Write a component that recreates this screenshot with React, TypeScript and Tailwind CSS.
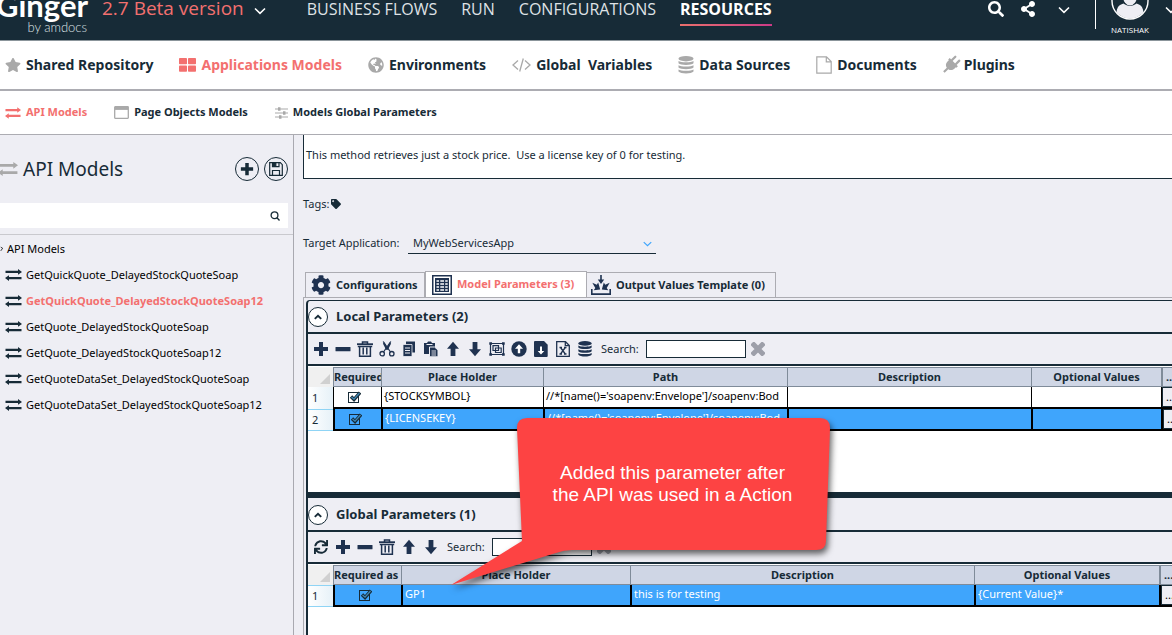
import React from "react";
import {
  FaCog,
  FaGlobeAmericas,
  FaSearch,
  FaShareAlt,
  FaStar,
  FaSync,
  FaTag,
} from "react-icons/fa";

type SvgProps = { className?: string };

const Chevron = ({ className }: SvgProps) => (
  <svg viewBox="0 0 12 8" className={className} fill="none" stroke="currentColor" strokeWidth="1.6">
    <path d="M1 1.5 6 6.3 11 1.5" />
  </svg>
);

const Plus = ({ className }: SvgProps) => (
  <svg viewBox="0 0 16 16" className={className} fill="currentColor">
    <path d="M6 1h4v5h5v4h-5v5H6v-5H1V6h5z" />
  </svg>
);

const Minus = ({ className }: SvgProps) => (
  <svg viewBox="0 0 16 16" className={className} fill="currentColor">
    <rect x="0.500" y="6" width="15" height="4.300" rx="0.500" />
  </svg>
);

const Up = ({ className }: SvgProps) => (
  <svg viewBox="0 0 16 16" className={className} fill="currentColor">
    <path d="M8 .8 14 7.800H10.400V15H5.600V7.800H2z" />
  </svg>
);

const Down = ({ className }: SvgProps) => (
  <svg viewBox="0 0 16 16" className={className} fill="currentColor">
    <path d="M8 15.200 2 8.200H5.600V1h4.800v7.200H14z" />
  </svg>
);

const Arrows = ({ className }: SvgProps) => (
  <svg viewBox="0 0 17 12" className={className} fill="currentColor">
    <path d="M0.500 1.700h12.500V0l4 2.900-4 2.900V4.100H0.500z" />
    <path d="M16.500 10.300H4V12L0 9.100l4-2.900v1.700h12.500z" />
  </svg>
);

const Grid4 = ({ className }: SvgProps) => (
  <svg viewBox="0 0 17 14" className={className} fill="currentColor">
    <rect x="0" y="0" width="8" height="6.300" rx="0.800" />
    <rect x="9" y="0" width="8" height="6.300" rx="0.800" />
    <rect x="0" y="7.500" width="8" height="6.300" rx="0.800" />
    <rect x="9" y="7.500" width="8" height="6.300" rx="0.800" />
  </svg>
);

const Code = ({ className }: SvgProps) => (
  <svg viewBox="0 0 19 14" className={className} fill="none" stroke="currentColor" strokeWidth="1.300">
    <path d="M6 2.500 1 7l5 4.500M13 2.500 18 7l-5 4.500M11.300.500 7.700 13.500" />
  </svg>
);

const Stack = ({ className }: SvgProps) => (
  <svg viewBox="0 0 16 18" className={className} fill="currentColor">
    <ellipse cx="8" cy="2.700" rx="7.500" ry="2.700" />
    <path d="M.5 5c2 1.800 13 1.800 15 0v2.200c-2 2.300-13 2.300-15 0z" />
    <path d="M.5 9.200c2 1.800 13 1.800 15 0v2.200c-2 2.300-13 2.300-15 0z" />
    <path d="M.5 13.400c2 1.800 13 1.800 15 0v2.200c-2 2.600-13 2.600-15 0z" />
  </svg>
);

const Page = ({ className }: SvgProps) => (
  <svg viewBox="0 0 16 18" className={className} fill="none" stroke="currentColor" strokeWidth="1.200">
    <path d="M.8.8h9.700l4.700 4.700v11.700H.8zM10.300.8v5h4.900" />
  </svg>
);

const Plug = ({ className }: SvgProps) => (
  <svg viewBox="0 0 18 18" className={className} fill="currentColor">
    <g transform="rotate(45 9 9)">
      <rect x="4.600" y="-2.200" width="2.500" height="7.500" rx="1.100" />
      <rect x="10.900" y="-2.200" width="2.500" height="7.500" rx="1.100" />
      <path d="M2.500 4.500h13v2.400h-.9v2.400c0 2.800-1.900 4.700-4.400 5.200v5.800H7.800v-5.800C5.300 14 3.400 12.100 3.400 9.300V6.900h-.9z" />
    </g>
  </svg>
);

const Windowed = ({ className }: SvgProps) => (
  <svg viewBox="0 0 15 13" className={className} fill="none" stroke="currentColor">
    <rect x="0.700" y="0.700" width="13.600" height="11.600" rx="0.500" strokeWidth="1.300" />
    <path d="M1 2.200h13" strokeWidth="3.400" />
  </svg>
);

const Sliders = ({ className }: SvgProps) => (
  <svg viewBox="0 0 13 12" className={className} fill="currentColor">
    <path d="M0 1.500h13v1H0zM0 5.500h13v1H0zM0 9.500h13v1H0z" />
    <path d="M3 .3h2.500v3.400H3zM8 4.300h2.500v3.400H8zM4 8.300h2.500v3.400H4z" />
  </svg>
);

const Save = ({ className }: SvgProps) => (
  <svg viewBox="0 0 14 14" className={className} fill="none" stroke="currentColor" strokeWidth="1.200">
    <path d="M.7.7h10.600l2 2v10.600H.7z" />
    <path d="M3.500 13.300V8.500h7v4.800M3.500.7v4h6.500v-4" />
    <path d="M4 1h2.800v3.500H4z" fill="currentColor" />
  </svg>
);

const TableIcon = ({ className }: SvgProps) => (
  <svg viewBox="0 0 20 20" className={className} fill="currentColor">
    <path d="M0 0h20v20H0zM1.500 1.500v17h17v-17z" fillRule="evenodd" />
    <path d="M3 3h14v14H3z" />
    <path
      d="M4.500 6h2.500M8.300 6h3.700M13.200 6h2.500M4.500 9h2.500M8.300 9h3.700M13.200 9h2.500M4.500 12h2.500M8.300 12h3.700M13.200 12h2.500M4.500 15h2.500M8.300 15h3.700M13.200 15h2.500"
      stroke="#fff"
      strokeWidth="1.500"
    />
  </svg>
);

const Collect = ({ className }: SvgProps) => (
  <svg viewBox="0 0 20 20" className={className} fill="currentColor">
    <path d="M0 14h1.600v4.300h16.800V14H20v6H0z" />
    <path d="M9.200 0h1.600v4.500h2.400L10 9 6.800 4.500h2.400z" />
    <path d="M1.300 7.800 5.800 9.800 7.200 7.600l2 7-6.500.6 1.600-2.200z" />
    <path d="M18.700 7.800 14.200 9.800l-1.400-2.200-2 7 6.500.6-1.600-2.200z" />
  </svg>
);

const Trash = ({ className }: SvgProps) => (
  <svg viewBox="0 0 16 16" className={className} fill="none" stroke="currentColor" strokeWidth="1.500">
    <path d="M0 3.200h16" strokeWidth="1.800" />
    <path d="M.8 5.500h14.400" />
    <path d="M5.500 3V.9h5V3M2.600 5.300v9.900h10.800V5.300M6.200 6.500v7M9.800 6.500v7" />
  </svg>
);

const Cut = ({ className }: SvgProps) => (
  <svg viewBox="0 0 16 16" className={className} fill="none" stroke="currentColor" strokeWidth="1.300">
    <circle cx="3.200" cy="12.700" r="2.200" />
    <circle cx="12.800" cy="12.700" r="2.200" />
    <path d="M4.500 11 11.800.5M11.500 11 4.200.5" />
    <path d="m8 8.500 3.300-6.500M8 8.500 4.700 2" strokeWidth="1.800" />
  </svg>
);

const Copy = ({ className }: SvgProps) => (
  <svg viewBox="0 0 16 16" className={className}>
    <path d="M5 .5h9v11H5z" fill="currentColor" />
    <path d="M2 3.500h9v12H2z" fill="currentColor" stroke="#eeeef4" strokeWidth=".8" />
    <path d="M4 7h5M4 9.500h5M4 12h5" stroke="#eeeef4" strokeWidth="1" />
  </svg>
);

const Paste = ({ className }: SvgProps) => (
  <svg viewBox="0 0 16 16" className={className}>
    <path d="M1 2h3l1-1.500h3L9 2h3v11H1z" fill="currentColor" />
    <path d="M3.500 3.500h6" stroke="#eeeef4" />
    <path d="M6.500 6h5l3.500 3v6.800H6.500z" fill="currentColor" stroke="#eeeef4" strokeWidth="1" />
    <path d="M8.500 10h4.500M8.500 12h4.500M8.500 14h4.500" stroke="#eeeef4" strokeWidth=".9" />
  </svg>
);

const Group = ({ className }: SvgProps) => (
  <svg viewBox="0 0 16 14" className={className} fill="none" stroke="currentColor">
    <path d="M1.500 1.500h13v11h-13z" strokeWidth="1.200" />
    <path d="M4 3.700h5.500v4.800H4zM6.500 6h5.700v4.500H6.500z" strokeWidth="1.200" />
    <path
      d="M.3.300h2.700v2.500H.3zM13 .3h2.700v2.500H13zM.3 11.200h2.700v2.500H.3zM13 11.200h2.700v2.500H13z"
      fill="currentColor"
      stroke="none"
    />
  </svg>
);

const CircleUp = ({ className }: SvgProps) => (
  <svg viewBox="0 0 16 16" className={className}>
    <circle cx="8" cy="8" r="7.700" fill="currentColor" />
    <path d="M8 3.300 12 7.700H9.200v4.500H6.800V7.700H4z" fill="#fff" />
  </svg>
);

const FileDown = ({ className }: SvgProps) => (
  <svg viewBox="0 0 14 16" className={className}>
    <path d="M1 0h9l3.700 3.700V15q0 1-1 1H1q-1 0-1-1V1Q0 0 1 0z" fill="currentColor" />
    <path d="M6 5.500h2V10h2.300L7 13.600 3.700 10H6z" fill="#fff" />
  </svg>
);

const Excel = ({ className }: SvgProps) => (
  <svg viewBox="0 0 14 16" className={className} fill="none" stroke="currentColor" strokeWidth="1.300">
    <path d="M.7.7H9.500L13.300 4.500v10.800H.7zM9.300.7v4h4" />
    <path d="m4.500 6.500 4.800 6.500M9.300 6.500 4.500 13M3.500 6.500h2.500M8 6.500h2.500M3.500 13h2.500M8 13h2.500" />
  </svg>
);

const Cross = ({ className }: SvgProps) => (
  <svg viewBox="0 0 14 14" className={className} fill="none" stroke="currentColor" strokeWidth="5">
    <path d="m2.800 2.800 8.400 8.400M11.200 2.800 2.800 11.200" strokeLinecap="square" />
  </svg>
);

const Tick = ({ className }: SvgProps) => (
  <svg viewBox="0 0 12 12" className={className} fill="none">
    <path d="M2 5.500 5 8.500 11 1.500" stroke="#172b37" strokeWidth="3.400" />
    <path d="M2.500 6 5 8.200 10.500 2" stroke="#3f86b4" strokeWidth="1.300" />
  </svg>
);

const Avatar = ({ className }: SvgProps) => (
  <svg viewBox="0 0 38 38" className={className}>
    <defs>
      <clipPath id="avatar-clip">
        <circle cx="19" cy="19" r="17.500" />
      </clipPath>
    </defs>
    <g clipPath="url(#avatar-clip)" fill="#eeeef4">
      <ellipse cx="19" cy="14" rx="7" ry="9.500" />
      <path d="M5 38c0-12 2-15 7.500-16.500 4 3.300 9 3.300 13 0C31 23 33 26 33 38z" />
    </g>
    <circle cx="19" cy="19" r="18" fill="none" stroke="#fff" strokeWidth="1.400" />
  </svg>
);

const topLinks = ["BUSINESS FLOWS", "RUN", "CONFIGURATIONS"];

const sections = [
  { label: "Shared Repository", icon: <FaStar className="size-4" /> },
  { label: "Applications Models", icon: <Grid4 className="h-3.5 w-[17px]" />, active: true },
  { label: "Environments", icon: <FaGlobeAmericas className="size-4" /> },
  { label: "Global  Variables", icon: <Code className="h-3.5 w-[19px]" /> },
  { label: "Data Sources", icon: <Stack className="h-[18px] w-4" /> },
  { label: "Documents", icon: <Page className="h-[18px] w-4" /> },
  { label: "Plugins", icon: <Plug className="size-4 overflow-visible" /> },
];

const models = [
  "GetQuickQuote_DelayedStockQuoteSoap",
  "GetQuickQuote_DelayedStockQuoteSoap12",
  "GetQuote_DelayedStockQuoteSoap",
  "GetQuote_DelayedStockQuoteSoap12",
  "GetQuoteDataSet_DelayedStockQuoteSoap",
  "GetQuoteDataSet_DelayedStockQuoteSoap12",
];

const localTools: [string, React.ReactNode][] = [
  ["Add", <Plus className="size-4" />],
  ["Remove", <Minus className="size-4" />],
  ["Delete all", <Trash className="size-4" />],
  ["Cut", <Cut className="size-4" />],
  ["Copy", <Copy className="size-4" />],
  ["Paste", <Paste className="size-4" />],
  ["Move up", <Up className="size-4" />],
  ["Move down", <Down className="size-4" />],
  ["Merge", <Group className="h-3.5 w-4" />],
  ["Upload", <CircleUp className="size-4" />],
  ["Import", <FileDown className="h-4 w-3.5" />],
  ["Export to Excel", <Excel className="h-4 w-3.5" />],
  ["Data source", <Stack className="size-4" />],
];

const globalTools: [string, React.ReactNode][] = [
  ["Refresh", <FaSync className="size-3.5 text-[#172b37]" />],
  ["Add", <Plus className="size-4" />],
  ["Remove", <Minus className="size-4" />],
  ["Delete all", <Trash className="size-4" />],
  ["Move up", <Up className="size-4" />],
  ["Move down", <Down className="size-4" />],
];

function Toolbar({ tools, id }: { tools: [string, React.ReactNode][]; id: string }) {
  return (
    <div className="flex h-[30px] items-center pl-0.5 text-[#1f3250]">
      {tools.map(([label, icon]) => (
        <button key={label} aria-label={label} className="flex w-[22px] shrink-0 justify-center">
          {icon}
        </button>
      ))}
      <label htmlFor={id} className="ml-[5px] w-[45px] text-[11px] text-[#172b37]">
        Search:
      </label>
      <input id={id} className="h-[18px] w-[100px] border border-[#172b37] bg-white px-1 text-[11px]" />
      <button aria-label="Clear search" className="ml-[5px] text-[#9d9fa9]">
        <Cross className="size-3.5" />
      </button>
    </div>
  );
}

function PanelHeader({ title }: { title: string }) {
  return (
    <div className="flex h-[31px] shrink-0 items-center gap-2">
      <button
        aria-label={"Collapse " + title}
        className="flex size-5 items-center justify-center rounded-full border border-[#172b37] bg-white"
      >
        <svg viewBox="0 0 10 7" className="h-1.5 w-2" fill="none" stroke="currentColor" strokeWidth="2.400">
          <path d="M1 5.800 5 2l4 3.800" />
        </svg>
      </button>
      <h2 className="text-[13px] font-bold">{title}</h2>
    </div>
  );
}

type Column = { label: string; width: string };

function ParamTable({
  columns,
  rows,
  selected,
}: {
  columns: Column[];
  rows: string[][];
  selected: number;
}) {
  return (
    <table className="w-full table-fixed border-separate border-spacing-0 bg-white text-[11px]">
      <colgroup>
        <col className="w-[25px]" />
        {columns.map((c) => (
          <col key={c.label} className={c.width} />
        ))}
        <col />
      </colgroup>
      <thead>
        <tr className="h-5">
          <th className="bg-[#f0f0f0] p-0 align-bottom">
            <svg viewBox="0 0 10 10" className="mb-[3px] ml-auto mr-[3px] size-2.5" fill="#d0d0d0">
              <path d="M10 0v10H0z" />
            </svg>
          </th>
          {columns.map((c, i) => (
            <th
              key={c.label}
              className={
                "overflow-hidden whitespace-nowrap border-y border-l border-[#7f8b99] bg-[#cfd6e5] p-0 font-bold " +
                (i === 0 ? "text-left" : "text-center")
              }
            >
              {c.label}
            </th>
          ))}
          <th className="overflow-hidden whitespace-nowrap border-y border-l-2 border-[#7f8b99] bg-[#cfd6e5] p-0 pl-[3px] text-left font-bold">
            ...
          </th>
        </tr>
      </thead>
      <tbody>
        {rows.map((row, r) => {
          const on = r === selected;
          const cell = on
            ? "border-b-2 border-l-2 border-black bg-[#3fa5fc] text-white"
            : "border-b-2 border-l border-black text-black";
          return (
            <tr key={row[0]} className="h-[22px]">
              <th
                scope="row"
                className={
                  "bg-linear-to-r from-white to-[#e6f1f8] p-0 pl-1 text-left font-normal " +
                  (on ? "border-y border-[#8fd4f5]" : "")
                }
              >
                {r + 1}
              </th>
              <td className={cell + " p-0 pr-2"}>
                <span className="relative mx-auto block size-[11px] text-[#172b37]">
                  <input
                    type="checkbox"
                    defaultChecked
                    aria-label={"Required " + row[0]}
                    className="block size-[11px] appearance-none border border-current"
                  />
                  <Tick className="pointer-events-none absolute -top-px left-px size-3" />
                </span>
              </td>
              {row.map((text, i) => (
                <td key={i} className={cell + " overflow-hidden whitespace-nowrap p-0 pl-0.5 align-top leading-[18px]"}>
                  {text}
                </td>
              ))}
              <td className={cell + " overflow-hidden p-0"}>
                <button
                  aria-label={"Edit optional values of " + row[0]}
                  className="block h-5 w-6 border border-[#172b37] bg-[#eeeef4] pl-[3px] text-left text-[11px] text-black"
                >
                  ...
                </button>
              </td>
            </tr>
          );
        })}
      </tbody>
    </table>
  );
}

export default function App() {
  return (
    <div className="relative flex h-screen flex-col overflow-hidden bg-white font-['Noto_Sans','Open_Sans',sans-serif] text-[#172b37]">
      <header className="flex h-[41px] shrink-0 items-start overflow-hidden border-b border-[#8b959b] bg-[#172b37] font-['Open_Sans',sans-serif] text-[#dfe2e6]">
        <div className="-ml-1 -mt-2.5 w-[91px] shrink-0 font-['Lato',sans-serif]">
          <div className="text-[31px] font-bold leading-[30px] text-white">Ginger</div>
          <div className="text-right text-[13px] font-light leading-[14px]">by amdocs</div>
        </div>
        <button className="-mt-1.5 ml-[15px] flex shrink-0 items-center gap-2.5 text-[19px] leading-7 text-[#f3706f]">
          2.7 Beta version
          <Chevron className="mt-1.5 h-2 w-3 text-white" />
        </button>
        <nav className="-mt-px ml-[41px] flex gap-6 text-base leading-5">
          {topLinks.map((l) => (
            <a key={l} href="#" className="whitespace-nowrap">
              {l}
            </a>
          ))}
          <a href="#" className="font-bold text-white">
            RESOURCES
            <span className="mt-[5px] block h-0.5 bg-linear-to-r from-[#ea6f6c] to-[#cc3a86]" />
          </a>
        </nav>
        <div className="ml-auto flex shrink-0 items-start text-white">
          <button aria-label="Search" className="mt-px">
            <FaSearch className="size-4" />
          </button>
          <button aria-label="Share" className="ml-4 mt-px">
            <FaShareAlt className="size-4" />
          </button>
          <button aria-label="More" className="ml-[22px] mt-1.5">
            <Chevron className="h-2 w-3" />
          </button>
          <span className="ml-[25px] h-[29px] w-px bg-white" />
          <button className="-mt-[18px] ml-3.5 flex w-[40px] flex-col items-center">
            <Avatar className="size-[38px]" />
            <span className="mt-1 text-[8px] leading-3">NATISHAK</span>
          </button>
          <button aria-label="Account" className="-mr-[5px] ml-[15px] mt-1.5">
            <Chevron className="h-2 w-3" />
          </button>
        </div>
      </header>

      <nav className="flex h-[50px] shrink-0 items-center gap-[26px] border-b-2 border-[#acacb2] pl-[5px] text-sm font-bold">
        {sections.map((s) => (
          <a
            key={s.label}
            href="#"
            className={"flex items-center gap-[5px] whitespace-pre " + (s.active ? "text-[#f3706f]" : "")}
          >
            <span className={s.active ? "" : "text-[#a9a9a9]"}>{s.icon}</span>
            {s.label}
          </a>
        ))}
      </nav>

      <nav className="flex h-11 shrink-0 items-center gap-[27px] border-b border-[#acacb2] pl-[5px] text-[11px] font-bold">
        <a href="#" className="flex items-center gap-[5px] text-[#f3706f]">
          <Arrows className="h-3 w-4" />
          API Models
        </a>
        <a href="#" className="flex items-center gap-[5px]">
          <Windowed className="h-[13px] w-[15px] text-[#a9a9a9]" />
          Page Objects Models
        </a>
        <a href="#" className="flex items-center gap-[5px]">
          <Sliders className="h-3 w-[13px] text-[#a9a9a9]" />
          Models Global Parameters
        </a>
      </nav>

      <div className="flex min-h-0 flex-1 bg-[#eeeef4]">
        <aside className="w-[294px] shrink-0 border-r border-[#a9a9b0]">
          <div className="flex h-[68px] items-center pr-[5px]">
            <Arrows className="-ml-0.5 h-4 w-5 text-[#a9a9a9]" />
            <h1 className="ml-[5px] flex-1 text-[19px]">API Models</h1>
            <button aria-label="Add" className="flex size-6 items-center justify-center rounded-full border border-[#172b37]">
              <Plus className="size-3.5" />
            </button>
            <button
              aria-label="Save"
              className="ml-[5px] flex size-6 items-center justify-center rounded-full border border-[#172b37]"
            >
              <Save className="size-3.5" />
            </button>
          </div>
          <div className="border-b border-[#c9c9ce] pb-1.5">
            <div className="mr-[5px] flex h-[25px] items-center bg-white">
              <input aria-label="Search models" className="min-w-0 flex-1 px-1 text-xs outline-none" />
              <button aria-label="Search" className="mr-2">
                <svg viewBox="0 0 10 10" className="size-2.5" fill="none" stroke="currentColor" strokeWidth="1.300">
                  <circle cx="4.500" cy="4.200" r="3.400" />
                  <path d="m7 6.800 2.500 2.700" />
                </svg>
              </button>
            </div>
          </div>
          <ul className="pt-px text-[11px] text-black">
            <li className="flex h-[26px] items-center">
              <svg viewBox="0 0 4 6" className="mr-1 h-1.5 w-[3px]" fill="none" stroke="currentColor">
                <path d="M1 .5 3.500 2 1 5.500" />
              </svg>
              API Models
            </li>
            {models.map((m, i) => (
              <li key={m} className="flex h-[26px] items-center gap-1 whitespace-nowrap pl-[5px]">
                <Arrows className="h-3 w-[17px] shrink-0 text-[#172b37]" />
                <a href="#" className={i === 1 ? "font-bold text-[#f3706f]" : ""}>
                  {m}
                </a>
              </li>
            ))}
          </ul>
        </aside>

        <main className="flex min-w-0 flex-1 flex-col pl-[9px]">
          <textarea
            aria-label="Description"
            defaultValue="This method retrieves just a stock price.  Use a license key of 0 for testing."
            className="block h-11 shrink-0 resize-none overflow-hidden border-b border-l border-[#172b37] bg-white pl-0.5 pt-3 text-[11px] leading-4 outline-none"
          />
          <div className="mt-[17px] flex h-4 shrink-0 items-center gap-0.5 text-[11px]">
            Tags:
            <FaTag className="size-2.5" />
          </div>
          <div className="mt-5 flex h-[22px] shrink-0 items-center text-[11px]">
            <label htmlFor="target" className="w-[105px] whitespace-nowrap">
              Target Application:
            </label>
            <div className="relative h-[21px] w-[248px] border-b border-[#172b37]">
              <select id="target" className="h-5 w-full appearance-none bg-transparent pl-[5px] pt-0.5 text-[11px] outline-none">
                <option>MyWebServicesApp</option>
              </select>
              <Chevron className="pointer-events-none absolute right-1 top-2 h-1.5 w-[9px] text-[#3fa5fc]" />
            </div>
          </div>

          <div role="tablist" className="mt-[17px] flex h-[26px] shrink-0 items-end pl-0.5 text-[11px] font-bold">
            <button role="tab" className="flex h-[25px] w-[120px] items-center gap-[5px] whitespace-nowrap border border-b-0 border-[#acacb2] pl-[5px]">
              <FaCog className="size-5 text-[#1f3250]" />
              Configurations
            </button>
            <button
              role="tab"
              aria-selected="true"
              className="flex h-[26px] w-[162px] items-center gap-[5px] whitespace-nowrap border border-b-0 border-[#acacb2] bg-white pl-[6px] text-[#f3706f]"
            >
              <TableIcon className="size-5 text-[#1f3250]" />
              Model Parameters (3)
            </button>
            <button
              role="tab"
              className="flex h-[25px] w-[189px] items-center gap-[5px] whitespace-nowrap border border-b-0 border-l-0 border-[#acacb2] pl-1"
            >
              <Collect className="size-5 text-[#1f3250]" />
              Output Values Template (0)
            </button>
          </div>

          <div className="flex min-h-0 flex-1 flex-col border-l border-t border-[#acacb2] pl-0.5 pt-0.5">
            <section className="flex h-[198px] shrink-0 flex-col rounded-tl border-b-[6px] border-l-2 border-t border-[#172b37] bg-[#eeeef4]">
              <PanelHeader title="Local Parameters (2)" />
              <div className="border-b-2 border-t-2 border-[#172b37]">
                <Toolbar tools={localTools} id="local-search" />
              </div>
              <div className="min-h-0 flex-1 bg-white pt-px">
                <ParamTable
                  selected={1}
                  columns={[
                    { label: "Required", width: "w-[48px]" },
                    { label: "Place Holder", width: "w-[162px]" },
                    { label: "Path", width: "w-[244px]" },
                    { label: "Description", width: "w-[244px]" },
                    { label: "Optional Values", width: "w-[130px]" },
                  ]}
                  rows={[
                    ["{STOCKSYMBOL}", "//*[name()='soapenv:Envelope']/soapenv:Bod", "", ""],
                    ["{LICENSEKEY}", "//*[name()='soapenv:Envelope']/soapenv:Bod", "", ""],
                  ]}
                />
              </div>
            </section>
            <section className="flex min-h-0 flex-1 flex-col border-l-2 border-[#172b37] bg-[#eeeef4] pt-px">
              <PanelHeader title="Global Parameters (1)" />
              <div className="border-b-2 border-t-2 border-[#172b37]">
                <Toolbar tools={globalTools} id="global-search" />
              </div>
              <div className="min-h-0 flex-1 bg-white pt-px">
                <ParamTable
                  selected={0}
                  columns={[
                    { label: "Required as", width: "w-[68px]" },
                    { label: "Place Holder", width: "w-[229px]" },
                    { label: "Description", width: "w-[344px]" },
                    { label: "Optional Values", width: "w-[185px]" },
                  ]}
                  rows={[["GP1", "this is for testing", "{Current Value}*"]]}
                />
              </div>
            </section>
          </div>
        </main>
      </div>

      <div className="absolute left-[450px] top-[416px] h-[172px] w-[384px]">
        <svg viewBox="0 0 384 172" className="absolute inset-0 size-full overflow-visible drop-shadow-[2px_4px_3px_rgba(0,0,0,0.6)]">
          <path
            d="M77 2H370Q380 2 380 12L376 125Q376 134 366 134H122Q114 134 106 137L1 169 72 125 67 12Q67 2 77 2z"
            fill="#fd4343"
          />
        </svg>
        <p className="relative ml-[61px] pt-[46px] text-center font-['Liberation_Sans',sans-serif] text-[19px] leading-[22px] text-white">
          Added this parameter after
          <br />
          the API was used in a Action
        </p>
      </div>
    </div>
  );
}
